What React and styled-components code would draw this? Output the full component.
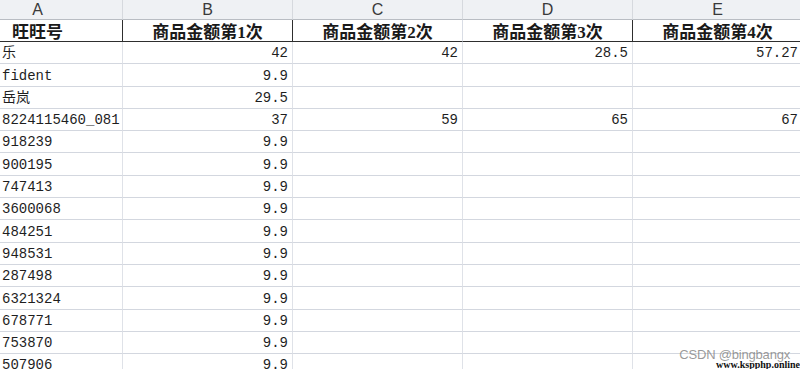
import React from 'react';
import styled, { createGlobalStyle } from 'styled-components';

const GlobalStyle = createGlobalStyle`
  html, body {
    margin: 0;
    padding: 0;
    background: #ffffff;
    overflow: hidden;
  }
`;

const Page = styled.div`
  position: relative;
  width: 800px;
  height: 369px;
  overflow: hidden;
  background: #ffffff;
`;

const Sheet = styled.div`
  display: grid;
  grid-template-columns: 123px 170px 170px 170px 170px;
  grid-template-rows: 20px 22px;
  grid-auto-rows: 22.3px;
  width: 803px;
`;

const ColHeader = styled.div`
  box-sizing: border-box;
  display: flex;
  align-items: center;
  justify-content: center;
  padding-right: ${({ shift }) => (shift ? `${shift}px` : '0')};
  background: #eff1f4;
  border-right: 1px solid #d6d9de;
  border-bottom: 1px solid #b9bdc3;
  font-family: 'Liberation Sans', 'Noto Sans', sans-serif;
  font-size: 16px;
  color: #3a3a3a;
  line-height: 1;
`;

const Heading = styled.div`
  box-sizing: border-box;
  display: flex;
  align-items: center;
  justify-content: center;
  padding-right: ${({ shift }) => (shift ? `${shift}px` : '0')};
  border-right: 1px solid ${({ light }) => (light ? '#d9dde5' : '#2e2e2e')};
  border-bottom: 1px solid #2e2e2e;
  font-family: 'Liberation Serif', 'Noto Sans CJK SC', serif;
  font-weight: bold;
  font-size: 17px;
  color: #1a1a1a;
  white-space: nowrap;
`;

const Cell = styled.div`
  box-sizing: border-box;
  display: flex;
  align-items: flex-end;
  justify-content: ${({ align }) => (align === 'left' ? 'flex-start' : 'flex-end')};
  padding-left: ${({ align }) => (align === 'left' ? '2px' : '0')};
  padding-right: ${({ align }) => (align === 'left' ? '0' : '4px')};
  padding-bottom: 2px;
  border-right: 1px solid #dfe2e8;
  border-bottom: 1px solid #d3d7df;
  font-family: 'Liberation Mono', 'Noto Sans CJK SC', monospace;
  font-size: 14px;
  color: #1e1e1e;
  white-space: nowrap;
  overflow: hidden;
`;

const Watermark = styled.div`
  position: absolute;
  right: 10px;
  bottom: 8px;
  font-family: 'Liberation Sans', 'Noto Sans', sans-serif;
  font-size: 13px;
  line-height: 13px;
  color: rgba(120, 120, 120, 0.75);
  letter-spacing: -0.2px;
`;

const SiteMark = styled.div`
  position: absolute;
  right: 0;
  bottom: -1px;
  font-family: 'Liberation Serif', serif;
  font-weight: bold;
  font-size: 10px;
  line-height: 10px;
  color: #111111;
  padding-left: 2px;
`;

const letters = ['A', 'B', 'C', 'D', 'E'];
const headings = ['旺旺号', '商品金额第1次', '商品金额第2次', '商品金额第3次', '商品金额第4次'];

const rows = [
  ['乐', '42', '42', '28.5', '57.27'],
  ['fident', '9.9', '', '', ''],
  ['岳岚', '29.5', '', '', ''],
  ['8224115460_081', '37', '59', '65', '67'],
  ['918239', '9.9', '', '', ''],
  ['900195', '9.9', '', '', ''],
  ['747413', '9.9', '', '', ''],
  ['3600068', '9.9', '', '', ''],
  ['484251', '9.9', '', '', ''],
  ['948531', '9.9', '', '', ''],
  ['287498', '9.9', '', '', ''],
  ['6321324', '9.9', '', '', ''],
  ['678771', '9.9', '', '', ''],
  ['753870', '9.9', '', '', ''],
  ['507906', '9.9', '', '', ''],
];

const App = () => (
  <>
    <GlobalStyle />
    <Page>
      <Sheet>
        {letters.map((l, i) => (
          <ColHeader key={l} shift={i === 0 ? 47 : 0}>
            {l}
          </ColHeader>
        ))}
        {headings.map((h, i) => (
          <Heading key={h} shift={i === 0 ? 47 : 0} light={i === 2}>
            {h}
          </Heading>
        ))}
        {rows.map((row, r) =>
          row.map((v, c) => (
            <Cell key={`${r}-${c}`} align={c === 0 ? 'left' : 'right'}>
              {v}
            </Cell>
          )),
        )}
      </Sheet>
      <Watermark>CSDN @bingbangx</Watermark>
      <SiteMark>www.kspphp.online</SiteMark>
    </Page>
  </>
);

export default App;
